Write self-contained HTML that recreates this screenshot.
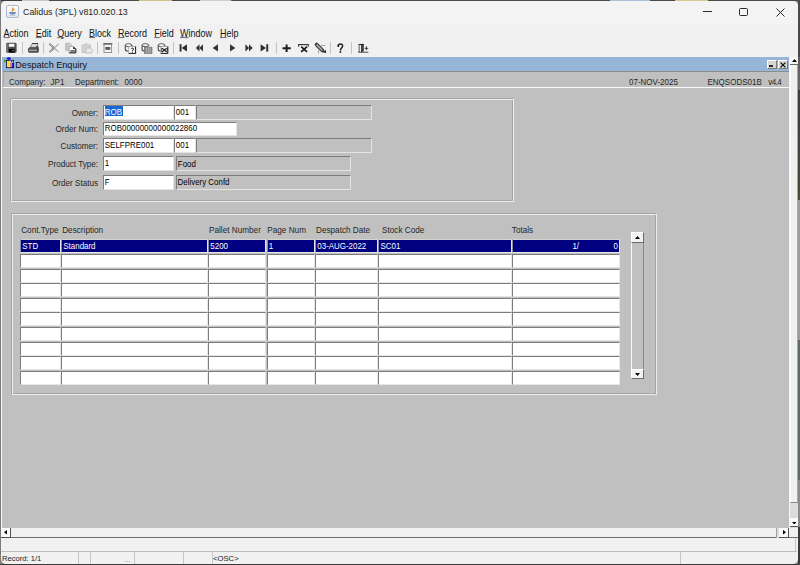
<!DOCTYPE html>
<html><head><meta charset="utf-8"><style>
*{margin:0;padding:0;box-sizing:border-box}
html,body{width:800px;height:565px;overflow:hidden;background:#2b2b2b;font-family:"Liberation Sans",sans-serif;color:#000}
.a{position:absolute}
.t{position:absolute;white-space:pre;line-height:1}
.sy{transform:scaleY(1.12);transform-origin:0 80%}
.fld{position:absolute;background:#fff;border-top:1px solid #7c7c7c;border-left:1px solid #7c7c7c;border-right:1px solid #e4e4e4;border-bottom:1px solid #e4e4e4}
.dsp{background:#c0c0c0}
.fld span,.cell span{position:absolute;top:2.9px;font-size:7.95px;white-space:pre;line-height:1;transform:scaleY(1.12);transform-origin:0 80%}
.cell{position:absolute;height:14px;background:#fff;border-top:1px solid #7c7c7c;border-left:1px solid #7c7c7c;border-right:1px solid #e6e6e6;border-bottom:1px solid #e6e6e6}
.nav{background:#000080;border-top-color:#d4d4d0;border-left-color:#8c8ca4;color:#fff}
.etch{position:absolute;border:1px solid #a4a4a4}
.etch2{position:absolute;border:1px solid #ededed}
.sep{position:absolute;top:42px;width:1px;height:12px;background:#c4c4c4}
.btn{position:absolute;background:#f2f2f2;border-top:1px solid #fff;border-left:1px solid #fff;border-right:1px solid #7a7a7a;border-bottom:1px solid #7a7a7a}
</style></head><body>
<div class="a" style="left:0;top:0;width:800px;height:565px;background:#8a8a8a"></div>
<div class="a" style="left:0;top:0;width:800px;height:1px;background:linear-gradient(90deg,#3c3c3c 0,#3c3c3c 22px,#c8c8c8 22px,#c8c8c8 49px,#4a4a4a 49px,#4a4a4a 139px,#cfc28a 139px,#cfc28a 172px,#4a4a4a 172px,#4a4a4a 200px,#cfcfcf 200px,#cfcfcf 230px,#4a4a4a 232px,#4a4a4a 610px,#a8c0d8 610px,#a8c0d8 650px,#4a4a4a 650px,#4a4a4a 675px,#d8c890 675px,#d8c890 708px,#4a4a4a 708px)"></div>
<div class="a" style="left:0;top:0;width:1px;height:565px;background:#7a7a7a"></div>
<div class="a" style="left:798px;top:0;width:2px;height:565px;background:linear-gradient(180deg,#4a4a4a 0,#4a4a4a 57px,#5a5a5a 57px,#6a6a6a 90px,#3c3c3a 90px,#4a4a3a 200px,#9c9c9c 200px,#9c9c9c 340px,#5c6a6a 340px,#5c6a6a 480px,#8a8a8a 480px,#8a8a8a 527px,#3a3a3a 527px)"></div>
<div class="a" style="left:0;top:564px;width:800px;height:1px;background:#3a3a3a"></div>
<div class="a" style="left:1px;top:1px;width:797px;height:563px;background:#f1f1f1;border-radius:5px;overflow:hidden"></div>
<div class="a" style="left:1px;top:1px;width:797px;height:23px;background:#f3f3f3;border-radius:5px 5px 0 0"></div>
<div class="a" style="left:6px;top:5px;width:13px;height:13px;border:1px solid #a8bbcf;border-radius:2px;background:linear-gradient(#fdfdfd,#e4e9ee)"></div>
<svg class="a" style="left:8px;top:7px" width="9" height="9" viewBox="0 0 9 9"><path d="M4.5 0.5C5.5 1.5 3.5 2.5 4.5 3.8C5 2.8 6.5 2.8 5.5 1.6" fill="none" stroke="#f09030" stroke-width="1.2"/><path d="M1 5H8C7.6 7 6.5 7.6 4.5 7.6S1.4 7 1 5Z" fill="#6d8fb5"/><path d="M1.5 8.3H7.5" stroke="#9ab0c8" stroke-width="0.7"/></svg>
<div class="t sy" style="left:23px;top:7.6px;font-size:8.85px;color:#222">Calidus (3PL) v810.020.13</div>
<div class="a" style="left:702.5px;top:11px;width:9px;height:1px;background:#2a2a2a"></div>
<div class="a" style="left:739px;top:8px;width:9px;height:8px;border:1px solid #2a2a2a;border-radius:1.5px"></div>
<svg class="a" style="left:776px;top:8px" width="9" height="9" viewBox="0 0 9 9"><path d="M0.5 0.5L8.5 8.5M8.5 0.5L0.5 8.5" stroke="#2a2a2a" stroke-width="1"/></svg>
<div class="t sy" style="left:3.6px;top:29.6px;font-size:9px;color:#111"><u style="text-underline-offset:0.1px;text-decoration-color:#777">A</u>ction</div>
<div class="t sy" style="left:35.8px;top:29.6px;font-size:9px;color:#111"><u style="text-underline-offset:0.1px;text-decoration-color:#777">E</u>dit</div>
<div class="t sy" style="left:57.2px;top:29.6px;font-size:9px;color:#111"><u style="text-underline-offset:0.1px;text-decoration-color:#777">Q</u>uery</div>
<div class="t sy" style="left:89.1px;top:29.6px;font-size:9px;color:#111"><u style="text-underline-offset:0.1px;text-decoration-color:#777">B</u>lock</div>
<div class="t sy" style="left:117.9px;top:29.6px;font-size:9px;color:#111"><u style="text-underline-offset:0.1px;text-decoration-color:#777">R</u>ecord</div>
<div class="t sy" style="left:154.3px;top:29.6px;font-size:9px;color:#111"><u style="text-underline-offset:0.1px;text-decoration-color:#777">F</u>ield</div>
<div class="t sy" style="left:180px;top:29.6px;font-size:9px;color:#111"><u style="text-underline-offset:0.1px;text-decoration-color:#777">W</u>indow</div>
<div class="t sy" style="left:219.9px;top:29.6px;font-size:9px;color:#111"><u style="text-underline-offset:0.1px;text-decoration-color:#777">H</u>elp</div>
<div class="sep" style="left:22.0px"></div>
<div class="sep" style="left:43.0px"></div>
<div class="sep" style="left:97.0px"></div>
<div class="sep" style="left:118.0px"></div>
<div class="sep" style="left:173.0px"></div>
<div class="sep" style="left:276.0px"></div>
<div class="sep" style="left:330.0px"></div>
<div class="sep" style="left:351.0px"></div>

<svg class="a" style="left:0;top:40px" width="372" height="16" viewBox="0 40 372 16">
 <!-- save -->
 <rect x="6.2" y="42.8" width="10.4" height="10" rx="1.4" fill="#4e4e4e"/>
 <rect x="6.2" y="43.5" width="1.6" height="8.6" fill="#7a7a7a"/>
 <rect x="8.8" y="43.8" width="5.6" height="3" fill="#fafafa"/>
 <rect x="8.8" y="49" width="5.8" height="3.6" fill="#000"/>
 <circle cx="13" cy="50.6" r="0.7" fill="#ddd"/>
 <!-- print -->
 <path d="M30 47.6L32.3 43.5H37.9L37.4 46.4L36.2 47.6Z" fill="#d6d6d6" stroke="#5a5a5a" stroke-width="0.7"/>
 <path d="M32.3 43.5H37.9" stroke="#333" stroke-width="1"/>
 <path d="M28 49.6C28 48 29 47.3 30.4 47.3H35.6C36.4 46 37.2 45.6 37.9 46C38.7 46.6 38.9 48 38.9 49.6V50.9C38.9 52 38.2 52.7 37.2 52.7H29.8C28.7 52.7 28 52 28 50.9Z" fill="#4c4c4c"/>
 <path d="M29 50.3H36.9" stroke="#dadada" stroke-width="0.9"/>
 <path d="M29.4 48.6H36" stroke="#6e6e6e" stroke-width="0.5"/>
 <!-- cut (disabled) -->
 <path d="M50 44.2L54 48L50.2 51.6" fill="none" stroke="#8c8c8c" stroke-width="2.1" stroke-linecap="round"/>
 <path d="M50 44.2L52.6 46.6M50.2 51.6L52.6 49.4" stroke="#d6d6d6" stroke-width="0.6"/>
 <path d="M54 48L58.4 44.1M54 48L58.2 51.7" stroke="#aaaaaa" stroke-width="1.1" stroke-linecap="round"/>
 <!-- copy -->
 <path d="M65.6 43.2H69.8L71.2 44.6V50.6H65.6Z" fill="#d4d4d4" stroke="#b0b0b0" stroke-width="0.8"/>
 <rect x="66.4" y="44" width="2.2" height="5.8" fill="#c0c0c0"/>
 <path d="M69.2 46.4H73.4L75.8 48.8V52.8H69.2Z" fill="#fafafa" stroke="#a0a0a0" stroke-width="0.8"/>
 <path d="M75.8 48.8V52.8H69.2" fill="none" stroke="#1e1e1e" stroke-width="1"/>
 <path d="M73.2 46.2L76 49H73.2Z" fill="#222"/>
 <rect x="70.4" y="50" width="4.4" height="1.8" fill="#6a6a6a"/>
 <!-- paste -->
 <path d="M82.2 45H85V44H88V45H90.5V52.5H82.2Z" fill="#d2d2d2" stroke="#bdbdbd" stroke-width="0.8"/>
 <path d="M86 48H90.5L92 49.5V53H86Z" fill="#eaeaea" stroke="#b8b8b8" stroke-width="0.8"/>
 <!-- clear -->
 <rect x="103.3" y="43.2" width="9" height="1.4" fill="#4a4a4a"/>
 <rect x="104" y="44.5" width="7.6" height="8" fill="#f4f4f4" stroke="#8a8a8a" stroke-width="0.9"/>
 <rect x="105.4" y="47" width="4.8" height="2.8" fill="#555"/>
 <!-- enter query -->
 <ellipse cx="128.6" cy="45.2" rx="3.3" ry="1.5" fill="#f8f8f8" stroke="#4a4a4a" stroke-width="0.9"/>
 <path d="M125.3 45.2V49.6C125.3 50.8 126.8 51.3 128.6 51.3" fill="none" stroke="#4a4a4a" stroke-width="1.1"/>
 <path d="M131.9 45.2V46.5" stroke="#4a4a4a" stroke-width="0.9"/>
 <rect x="128.8" y="46.6" width="6.8" height="6.8" fill="#fdfdfd" stroke="#9a9a9a" stroke-width="0.8"/>
 <path d="M135.6 46.6V53.4H128.8" fill="none" stroke="#1e1e1e" stroke-width="1"/>
 <path d="M131.1 48.9C131.2 47.9 133.6 47.9 133.6 49C133.6 49.9 132.4 50 132.3 51" fill="none" stroke="#111" stroke-width="0.95"/>
 <rect x="131.8" y="51.6" width="1" height="1" fill="#111"/>
 <!-- execute query -->
 <ellipse cx="145.4" cy="45.2" rx="3.3" ry="1.5" fill="#f8f8f8" stroke="#4a4a4a" stroke-width="0.9"/>
 <path d="M142.1 45.2V49.6C142.1 50.8 143.6 51.3 145.4 51.3" fill="none" stroke="#4a4a4a" stroke-width="1.1"/>
 <path d="M148.70000000000002 45.2V46.5" stroke="#4a4a4a" stroke-width="0.9"/>
 <rect x="144.4" y="47.2" width="7.6" height="6.3" fill="#8a8a8a" stroke="#666" stroke-width="0.6"/>
 <path d="M146.4 47.4V53.3M148.3 47.4V53.3M150.2 47.4V53.3" stroke="#c8c8c8" stroke-width="0.6"/>
 <path d="M144.6 49.4H151.8M144.6 51.4H151.8" stroke="#a0a0a0" stroke-width="0.5"/>
 <!-- cancel query -->
 <ellipse cx="161.5" cy="45.2" rx="3.3" ry="1.5" fill="#f8f8f8" stroke="#4a4a4a" stroke-width="0.9"/>
 <path d="M158.2 45.2V49.6C158.2 50.8 159.7 51.3 161.5 51.3" fill="none" stroke="#4a4a4a" stroke-width="1.1"/>
 <path d="M164.8 45.2V46.5" stroke="#4a4a4a" stroke-width="0.9"/>
 <rect x="160.8" y="46.6" width="7" height="6.8" fill="#fdfdfd" stroke="#9a9a9a" stroke-width="0.8"/>
 <path d="M167.8 46.6V53.4H160.8" fill="none" stroke="#1e1e1e" stroke-width="1"/>
 <path d="M162 48.2L166.6 52M166.6 48.2L162 52" stroke="#111" stroke-width="1.1"/>
 <path d="M161.6 48.2V52M167 48.2V52" stroke="#333" stroke-width="0.8"/>
 <!-- first -->
 <rect x="179.6" y="44.2" width="1.9" height="7.4" fill="#2e2e2e"/>
 <path d="M187 44.2V51.6L181.6 47.9Z" fill="#2e2e2e"/>
 <!-- prev set -->
 <path d="M199.5 44.3V51.6L195.8 47.95Z" fill="#333"/>
 <path d="M203 44.3V51.6L199.3 47.95Z" fill="#333"/>
 <!-- prev -->
 <path d="M218 44.3V51.6L212.6 47.95Z" fill="#333"/>
 <!-- next -->
 <path d="M230 44.3V51.6L235.4 47.95Z" fill="#333"/>
 <!-- next set -->
 <path d="M245.4 44.3V51.6L249.1 47.95Z" fill="#333"/>
 <path d="M249 44.3V51.6L252.7 47.95Z" fill="#333"/>
 <!-- last -->
 <path d="M260.6 44.2V51.6L266 47.9Z" fill="#2e2e2e"/>
 <rect x="266.3" y="44.2" width="1.9" height="7.4" fill="#2e2e2e"/>
 <!-- insert record -->
 <path d="M286.6 44.6V52M282.5 48.3H290.8" stroke="#1e1e1e" stroke-width="2"/>
 <!-- delete record -->
 <path d="M298.6 46.8V44.6H308.3V46.8" fill="#fafafa" stroke="#3a3a3a" stroke-width="1.1"/>
 <path d="M301.2 46.6L307 51.8M307 46.6L301.2 51.8" stroke="#1a1a1a" stroke-width="1.7"/>
 <!-- duplicate/pencil -->
 <path d="M321 45.5H325.5" stroke="#909090" stroke-width="0.8"/>
 <path d="M318.6 50V53.6" stroke="#8a8a8a" stroke-width="0.8"/>
 <path d="M316.6 44.6L322.4 50.4" stroke="#3c3c3c" stroke-width="3.8" stroke-linecap="round"/>
 <path d="M316.6 44.6L322.4 50.4" stroke="#a8a8a8" stroke-width="1.5"/>
 <path d="M323 52.6L326.2 53L325.6 49.8Z" fill="#1a1a1a"/>
 <!-- help -->
 <path d="M338.2 45.8C338.2 43.4 342.6 43.2 342.6 45.9C342.6 47.9 340.4 48.1 340.4 50.4" fill="none" stroke="#222" stroke-width="1.5"/><circle cx="338.3" cy="46" r="1.1" fill="#222"/><circle cx="340.4" cy="52" r="0.95" fill="#222"/>
 <!-- exit -->
 <path d="M358.4 44.5H364" stroke="#222" stroke-width="1.1"/>
 <path d="M359.2 44.5V52" stroke="#777" stroke-width="1.2"/>
 <path d="M361 45V52.3L363.8 51.2V44.5Z" fill="#3e3e3e"/>
 <path d="M358 52.2H368.3" stroke="#333" stroke-width="0.9"/>
 <path d="M364.6 48.3H368.2M366.4 46.4V50.2" stroke="#2a2a2a" stroke-width="0.9"/>
</svg>

<div class="a" style="left:1px;top:57px;width:787.5px;height:470.5px;background:#c0c0c0"></div>
<div class="a" style="left:1px;top:57px;width:1.2px;height:470.5px;background:#f8f8f8"></div>
<div class="a" style="left:2px;top:57px;width:787px;height:14px;background:#97b5d7"></div>
<svg class="a" style="left:3px;top:57px" width="12" height="12" viewBox="0 0 12 12">
<ellipse cx="5.8" cy="1.6" rx="2" ry="1.4" fill="#1010e0"/>
<path d="M1.2 2.5C0.6 3.6 1 5 2.2 5.6L3.2 3.2Z" fill="#30a030"/>
<rect x="3" y="2.9" width="8" height="8.2" fill="#0a0a20"/>
<rect x="3.8" y="3.7" width="3.2" height="6.6" fill="#d8d8d8"/>
<path d="M6.2 4.6C4 5 6.2 7 4.6 9.8" fill="none" stroke="#e8e020" stroke-width="1.5"/>
<rect x="7" y="3.7" width="3.3" height="2.2" fill="#f4f4f4"/>
<circle cx="8.6" cy="4.6" r="0.9" fill="#2040ff"/>
<rect x="7" y="5.9" width="2" height="4.4" fill="#f07878"/>
<rect x="9" y="6.5" width="1.4" height="3.8" fill="#2a2ad8"/>
</svg>
<div class="t" style="left:15.3px;top:60.6px;font-size:9.1px;color:#101018">Despatch Enquiry</div>
<div class="btn" style="left:766.5px;top:59.5px;width:10px;height:9.5px;background:#d6d6d6"></div>
<div class="a" style="left:769.3px;top:65px;width:3.8px;height:1.8px;background:#2a2a2a"></div>
<div class="btn" style="left:778px;top:59.5px;width:10px;height:9.5px;background:#d6d6d6"></div>
<svg class="a" style="left:780px;top:61.5px" width="6" height="6" viewBox="0 0 6 6"><path d="M0.6 0.6L5.4 5.4M5.4 0.6L0.6 5.4" stroke="#111" stroke-width="1.3"/></svg>
<div class="a" style="left:2.5px;top:71px;width:786px;height:1px;background:#8c8c8c"></div>
<div class="a" style="left:2.5px;top:72px;width:1px;height:15px;background:#a8a8a8"></div>
<div class="a" style="left:2.5px;top:87px;width:786px;height:1px;background:#f8f8f8"></div>
<div class="t sy" style="left:9px;top:78.6px;font-size:8px;color:#262626">Company:</div>
<div class="t sy" style="left:50.6px;top:78.6px;font-size:8px;color:#262626">JP1</div>
<div class="t sy" style="left:75px;top:78.6px;font-size:8px;color:#262626">Department:</div>
<div class="t sy" style="left:124.6px;top:78.6px;font-size:8px;color:#262626">0000</div>
<div class="t sy" style="left:629px;top:78.6px;font-size:8px;color:#262626">07-NOV-2025</div>
<div class="t sy" style="left:707.5px;top:78.6px;font-size:8px;color:#262626">ENQSODS01B</div>
<div class="t sy" style="left:768.3px;top:78.6px;font-size:8px;color:#262626;letter-spacing:-0.55px">v4.4</div>
<div class="etch" style="left:10px;top:98px;width:503px;height:103px"></div>
<div class="etch2" style="left:11px;top:99px;width:503px;height:103px"></div>
<div class="t sy" style="left:30px;width:68px;text-align:right;top:109.9px;font-size:8.15px;color:#262626">Owner:</div>
<div class="t sy" style="left:30px;width:68px;text-align:right;top:126.4px;font-size:8.15px;color:#262626">Order Num:</div>
<div class="t sy" style="left:30px;width:68px;text-align:right;top:142.9px;font-size:8.15px;color:#262626">Customer:</div>
<div class="t sy" style="left:30px;width:68px;text-align:right;top:160.9px;font-size:8.15px;color:#262626">Product Type:</div>
<div class="t sy" style="left:30px;width:68px;text-align:right;top:179.6px;font-size:8.15px;color:#262626">Order Status</div>
<div class="fld" style="left:103px;top:105px;width:71px;height:14.5px"><span style="left:1px;top:0.1px;width:18px;height:10.4px;background:#1668d4;transform:none"></span><span style="left:0.8px;color:#fff">ROB</span></div>
<div class="fld" style="left:174px;top:105px;width:21.5px;height:14.5px"><span style="left:0.8px">001</span></div>
<div class="fld dsp" style="left:196px;top:105px;width:175.5px;height:14.5px"></div>
<div class="fld" style="left:103px;top:121.5px;width:134px;height:14.5px"><span style="left:0.8px">ROB00000000000022860</span></div>
<div class="fld" style="left:103px;top:138.3px;width:71px;height:14.5px"><span style="left:0.8px">SELFPRE001</span></div>
<div class="fld" style="left:174px;top:138.3px;width:21.5px;height:14.5px"><span style="left:0.8px">001</span></div>
<div class="fld dsp" style="left:196px;top:138.3px;width:175.5px;height:14.5px"></div>
<div class="fld" style="left:103px;top:156.2px;width:71px;height:14.5px"><span style="left:0.8px">1</span></div>
<div class="fld dsp" style="left:175.6px;top:156.2px;width:175.5px;height:14.5px"><span style="left:1.2px;top:3.6px">Food</span></div>
<div class="fld" style="left:103px;top:175.2px;width:71px;height:14.5px"><span style="left:0.8px;top:3.3px">F</span></div>
<div class="fld dsp" style="left:175.6px;top:175.2px;width:175.5px;height:14.5px"><span style="left:0.9px;top:3.3px">Delivery Confd</span></div>
<div class="etch" style="left:10.5px;top:213px;width:645px;height:181px"></div>
<div class="etch2" style="left:11.5px;top:214px;width:645px;height:181px"></div>
<div class="t sy" style="left:21.2px;top:226.6px;font-size:8.2px;color:#262626">Cont.Type</div>
<div class="t sy" style="left:62.2px;top:226.6px;font-size:8.2px;color:#262626">Description</div>
<div class="t sy" style="left:209px;top:226.6px;font-size:8.2px;color:#262626">Pallet Number</div>
<div class="t sy" style="left:267.3px;top:226.6px;font-size:8.2px;color:#262626">Page Num</div>
<div class="t sy" style="left:316px;top:226.6px;font-size:8.2px;color:#262626">Despatch Date</div>
<div class="t sy" style="left:382px;top:226.6px;font-size:8.2px;color:#262626">Stock Code</div>
<div class="t sy" style="left:511.8px;top:226.6px;font-size:8.2px;color:#262626">Totals</div>
<div class="cell nav" style="left:20px;top:239.20px;width:41px"><span style="left:1.3px">STD</span></div>
<div class="cell nav" style="left:61px;top:239.20px;width:147px"><span style="left:1.3px">Standard</span></div>
<div class="cell nav" style="left:208px;top:239.20px;width:58px"><span style="left:1.3px">5200</span></div>
<div class="cell nav" style="left:266.5px;top:239.20px;width:48.5px"><span style="left:1.3px">1</span></div>
<div class="cell nav" style="left:315px;top:239.20px;width:63px"><span style="left:1.3px">03-AUG-2022</span></div>
<div class="cell nav" style="left:378.2px;top:239.20px;width:134px"><span style="left:1.3px">SC01</span></div>
<div class="cell nav" style="left:512.4px;top:239.20px;width:107.5px"><span style="left:59px">1/</span><span style="right:1px">0</span></div>
<div class="cell" style="left:20px;top:253.85px;width:41px"></div>
<div class="cell" style="left:61px;top:253.85px;width:147px"></div>
<div class="cell" style="left:208px;top:253.85px;width:58px"></div>
<div class="cell" style="left:266.5px;top:253.85px;width:48.5px"></div>
<div class="cell" style="left:315px;top:253.85px;width:63px"></div>
<div class="cell" style="left:378.2px;top:253.85px;width:134px"></div>
<div class="cell" style="left:512.4px;top:253.85px;width:107.5px"></div>
<div class="cell" style="left:20px;top:268.50px;width:41px"></div>
<div class="cell" style="left:61px;top:268.50px;width:147px"></div>
<div class="cell" style="left:208px;top:268.50px;width:58px"></div>
<div class="cell" style="left:266.5px;top:268.50px;width:48.5px"></div>
<div class="cell" style="left:315px;top:268.50px;width:63px"></div>
<div class="cell" style="left:378.2px;top:268.50px;width:134px"></div>
<div class="cell" style="left:512.4px;top:268.50px;width:107.5px"></div>
<div class="cell" style="left:20px;top:283.15px;width:41px"></div>
<div class="cell" style="left:61px;top:283.15px;width:147px"></div>
<div class="cell" style="left:208px;top:283.15px;width:58px"></div>
<div class="cell" style="left:266.5px;top:283.15px;width:48.5px"></div>
<div class="cell" style="left:315px;top:283.15px;width:63px"></div>
<div class="cell" style="left:378.2px;top:283.15px;width:134px"></div>
<div class="cell" style="left:512.4px;top:283.15px;width:107.5px"></div>
<div class="cell" style="left:20px;top:297.80px;width:41px"></div>
<div class="cell" style="left:61px;top:297.80px;width:147px"></div>
<div class="cell" style="left:208px;top:297.80px;width:58px"></div>
<div class="cell" style="left:266.5px;top:297.80px;width:48.5px"></div>
<div class="cell" style="left:315px;top:297.80px;width:63px"></div>
<div class="cell" style="left:378.2px;top:297.80px;width:134px"></div>
<div class="cell" style="left:512.4px;top:297.80px;width:107.5px"></div>
<div class="cell" style="left:20px;top:312.45px;width:41px"></div>
<div class="cell" style="left:61px;top:312.45px;width:147px"></div>
<div class="cell" style="left:208px;top:312.45px;width:58px"></div>
<div class="cell" style="left:266.5px;top:312.45px;width:48.5px"></div>
<div class="cell" style="left:315px;top:312.45px;width:63px"></div>
<div class="cell" style="left:378.2px;top:312.45px;width:134px"></div>
<div class="cell" style="left:512.4px;top:312.45px;width:107.5px"></div>
<div class="cell" style="left:20px;top:327.10px;width:41px"></div>
<div class="cell" style="left:61px;top:327.10px;width:147px"></div>
<div class="cell" style="left:208px;top:327.10px;width:58px"></div>
<div class="cell" style="left:266.5px;top:327.10px;width:48.5px"></div>
<div class="cell" style="left:315px;top:327.10px;width:63px"></div>
<div class="cell" style="left:378.2px;top:327.10px;width:134px"></div>
<div class="cell" style="left:512.4px;top:327.10px;width:107.5px"></div>
<div class="cell" style="left:20px;top:341.75px;width:41px"></div>
<div class="cell" style="left:61px;top:341.75px;width:147px"></div>
<div class="cell" style="left:208px;top:341.75px;width:58px"></div>
<div class="cell" style="left:266.5px;top:341.75px;width:48.5px"></div>
<div class="cell" style="left:315px;top:341.75px;width:63px"></div>
<div class="cell" style="left:378.2px;top:341.75px;width:134px"></div>
<div class="cell" style="left:512.4px;top:341.75px;width:107.5px"></div>
<div class="cell" style="left:20px;top:356.40px;width:41px"></div>
<div class="cell" style="left:61px;top:356.40px;width:147px"></div>
<div class="cell" style="left:208px;top:356.40px;width:58px"></div>
<div class="cell" style="left:266.5px;top:356.40px;width:48.5px"></div>
<div class="cell" style="left:315px;top:356.40px;width:63px"></div>
<div class="cell" style="left:378.2px;top:356.40px;width:134px"></div>
<div class="cell" style="left:512.4px;top:356.40px;width:107.5px"></div>
<div class="cell" style="left:20px;top:371.05px;width:41px"></div>
<div class="cell" style="left:61px;top:371.05px;width:147px"></div>
<div class="cell" style="left:208px;top:371.05px;width:58px"></div>
<div class="cell" style="left:266.5px;top:371.05px;width:48.5px"></div>
<div class="cell" style="left:315px;top:371.05px;width:63px"></div>
<div class="cell" style="left:378.2px;top:371.05px;width:134px"></div>
<div class="cell" style="left:512.4px;top:371.05px;width:107.5px"></div>
<div class="a" style="left:631px;top:242.5px;width:13px;height:126.5px;background:#c0c0c0;border-left:1px solid #fafafa;border-right:1px solid #8a8a8a"></div>
<div class="btn" style="left:631px;top:232px;width:13px;height:11px;border-right-color:#6a6a6a;border-bottom-color:#6a6a6a"></div>
<svg class="a" style="left:634.8px;top:236px" width="5" height="3"><path d="M0 3L2.5 0L5 3Z" fill="#000"/></svg>
<div class="btn" style="left:631px;top:368.5px;width:13px;height:10.5px;border-right-color:#6a6a6a;border-bottom-color:#6a6a6a"></div>
<svg class="a" style="left:634.8px;top:372.5px" width="5" height="3"><path d="M0 0L2.5 3L5 0Z" fill="#000"/></svg>
<div class="a" style="left:789px;top:57px;width:9px;height:470.5px;background:#dcdcdc;border-left:1px solid #f6f6f6"></div>
<div class="a" style="left:790px;top:65px;width:8px;height:437.5px;background:#f0f0f0;border-left:1px solid #fdfdfd;border-right:1px solid #a8a8a8;border-bottom:1px solid #8a8a8a"></div>
<div class="a" style="left:790px;top:57px;width:8px;height:8px;background:#f8f8f8;border-bottom:1.2px solid #6a6a6a"></div>
<svg class="a" style="left:791.7px;top:59.3px" width="5" height="3"><path d="M0 3L2.5 0L5 3Z" fill="#000"/></svg>
<div class="a" style="left:789.5px;top:518.3px;width:8.5px;height:9.2px;background:#f8f8f8;border-bottom:1px solid #555"></div>
<svg class="a" style="left:791.8px;top:521.6px" width="4.5" height="2.6"><path d="M0 0L2.25 2.6L4.5 0Z" fill="#000"/></svg>
<div class="a" style="left:1px;top:527.5px;width:797px;height:10px;background:#f0f0f0;border-bottom:1px solid #6e6e6e"></div>
<div class="a" style="left:1px;top:527.5px;width:10px;height:10px;background:#fafafa;border-right:1px solid #555;border-bottom:1px solid #505050"></div>
<svg class="a" style="left:4.2px;top:530.3px" width="3" height="4.6"><path d="M3 0L0 2.3L3 4.6Z" fill="#000"/></svg>
<div class="a" style="left:776px;top:527.5px;width:2.5px;height:10px;background:#dcdcdc;border-left:1px solid #a0a0a0"></div>
<div class="a" style="left:778.5px;top:527.5px;width:10px;height:10px;background:#fafafa;border-right:1px solid #555;border-bottom:1px solid #505050"></div>
<svg class="a" style="left:782.8px;top:530.3px" width="3" height="4.6"><path d="M0 0L3 2.3L0 4.6Z" fill="#000"/></svg>
<div class="a" style="left:1px;top:550.5px;width:796px;height:1px;background:#bdbdbd"></div>
<div class="a" style="left:794.5px;top:538px;width:1px;height:13px;background:#c8c8c8"></div>
<div class="t" style="left:2px;top:555.2px;font-size:7.6px;color:#1a1a1a">Record: 1/1</div>
<div class="a" style="left:78.0px;top:551.5px;width:1px;height:12px;background:#c6c6c6"></div>
<div class="a" style="left:89.5px;top:551.5px;width:1px;height:12px;background:#c6c6c6"></div>
<div class="a" style="left:134.0px;top:551.5px;width:1px;height:12px;background:#c6c6c6"></div>
<div class="a" style="left:183.0px;top:551.5px;width:1px;height:12px;background:#c6c6c6"></div>
<div class="a" style="left:212.0px;top:551.5px;width:1px;height:12px;background:#c6c6c6"></div>
<div class="a" style="left:680.0px;top:551.5px;width:1px;height:12px;background:#c6c6c6"></div>
<div class="t sy" style="left:124.5px;top:556px;font-size:7px;color:#808080">...</div>
<div class="t" style="left:213px;top:555.2px;font-size:7.7px;color:#1a1a1a">&lt;OSC&gt;</div>
<div class="a" style="left:0px;top:564px;width:800px;height:1px;background:#3a3a3a"></div>
</body></html>
